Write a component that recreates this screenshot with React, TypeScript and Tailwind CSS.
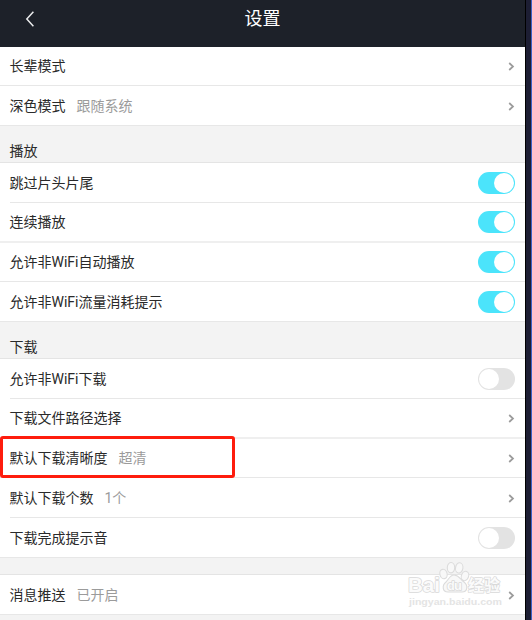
import type { ReactNode } from "react";
import clsx from "clsx";

interface RowProps {
  label: string;
  value?: string;
  height?: string;
  divider?: string;
  children?: ReactNode;
}

const Chevron = () => (
  <svg width="7" height="9" viewBox="0 0 7 9" fill="none" className="mt-px mr-2.5 shrink-0">
    <path d="M1.2 1 5 4.5 1.2 8" stroke="#9b9b9b" strokeWidth="1.7" />
  </svg>
);

const Toggle = ({ on = false }: { on?: boolean }) => (
  <span
    className={clsx(
      "mr-2.5 flex h-[22px] w-[37px] shrink-0 items-center rounded-full p-px",
      on ? "justify-end bg-[#4be4fb]" : "justify-start bg-[#e3e3e3]",
    )}
  >
    <span className="size-5 rounded-full bg-white" />
  </span>
);

const Row = ({ label, value, height = "h-[39px]", divider = "h-px", children }: RowProps) => (
  <div className="bg-white">
    <div className={clsx("flex items-center justify-between pl-[9.5px]", height)}>
      <div className="flex items-center text-[14px] leading-5 whitespace-nowrap">
        <span className="text-[#2a2a2a]">{label}</span>
        {value && <span className="ml-[11px] text-[#9b9b9b]">{value}</span>}
      </div>
      {children ?? <Chevron />}
    </div>
    <div className={clsx("bg-[#e7e7e7]", divider)} />
  </div>
);

const SectionTitle = ({ title }: { title: string }) => (
  <div className="flex h-[37px] items-end border-b border-[#e4e4e4] bg-[#f3f3f3] pb-px pl-[9.5px] text-[14px] leading-5 text-[#2a2a2a]">
    {title}
  </div>
);

const Watermark = () => (
  <svg width="100" height="48" viewBox="0 0 100 48" className="absolute top-[561px] left-[406px]">
    <g fill="#f8f8f8" stroke="#dcdcdc" strokeWidth="1.1">
      <ellipse cx="37.5" cy="13" rx="3.6" ry="4.8" transform="rotate(-14 37.5 13)" />
      <ellipse cx="45" cy="6.7" rx="3.7" ry="5.2" />
      <ellipse cx="53.2" cy="6.9" rx="3.7" ry="5.2" transform="rotate(8 53 7)" />
      <ellipse cx="59" cy="15" rx="3.6" ry="4.8" transform="rotate(20 59 15)" />
      <path d="M48 14c-4 0-5 4-8 7-4 3-4 10 2 10h14c6 0 6-7 2-10-4-3-5-7-10-7Z" />
    </g>
    <g
      fill="#fbfbfb"
      stroke="#d9d9d9"
      strokeWidth="1.6"
      strokeLinejoin="round"
      paintOrder="stroke"
      fontFamily="Liberation Sans, Noto Sans CJK SC, sans-serif"
      fontWeight="bold"
    >
      <text x="2" y="30.5" fontSize="21" textLength="32" lengthAdjust="spacingAndGlyphs">Bai</text>
      <text x="41" y="28.5" fontSize="13" textLength="15">du</text>
      <text x="62" y="29.5" fontSize="16" textLength="32" strokeWidth="1.4">经验</text>
    </g>
    <text
      x="3"
      y="44"
      fill="#e4e4e4"
      fontFamily="Liberation Sans, sans-serif"
      fontSize="9"
      fontWeight="bold"
      textLength="93"
      lengthAdjust="spacingAndGlyphs"
    >
      jingyan.baidu.com
    </text>
  </svg>
);

const App = () => (
  <div className="relative flex h-[620px] w-[532px] overflow-hidden bg-[#1d1e33] font-[Roboto,'Noto_Sans_CJK_SC',sans-serif]">
    <div className="flex w-[525px] flex-col bg-[#f3f3f3]">
      <header className="grid h-[47px] grid-cols-[60px_1fr_60px] items-center bg-[#1d2129] pb-2.5 text-white">
        <svg width="9" height="16" viewBox="0 0 9 16" fill="none" className="ml-[25px]">
          <path d="M8.4 .7 1.8 8l6.6 7.3" stroke="#e9eaeb" strokeWidth="1.5" />
        </svg>
        <h1 className="text-center text-[18px] leading-6">设置</h1>
      </header>

      <Row label="长辈模式" height="h-[38px]" />
      <Row label="深色模式" value="跟随系统" />

      <SectionTitle title="播放" />
      <Row label="跳过片头片尾" divider="ml-2.5 h-px">
        <Toggle on />
      </Row>
      <Row label="连续播放" height="h-[38px]" divider="h-0.5 bg-[#efefef]">
        <Toggle on />
      </Row>
      <Row label="允许非WiFi自动播放" height="h-[38px]">
        <Toggle on />
      </Row>
      <Row label="允许非WiFi流量消耗提示">
        <Toggle on />
      </Row>

      <SectionTitle title="下载" />
      <Row label="允许非WiFi下载" divider="ml-2.5 h-px">
        <Toggle />
      </Row>
      <Row label="下载文件路径选择" height="h-[38px]" divider="h-0.5 bg-[#efefef]" />
      <Row label="默认下载清晰度" value="超清" height="h-[38px]" />
      <Row label="默认下载个数" value="1个" divider="ml-2.5 h-px" />
      <Row label="下载完成提示音">
        <Toggle />
      </Row>

      <div className="h-[17px] shrink-0 border-b border-[#e4e4e4]" />
      <Row label="消息推送" value="已开启" />
    </div>
    <div className="w-px bg-black" />
    <div className="w-[5px] bg-[#1d1e33]" />
    <div className="w-px bg-[#3b62c4]" />

    {/* marks the download quality row */}
    <div className="absolute top-[436px] left-0 h-[42px] w-[235px] rounded-[3px] border-3 border-[#fe1c0d]" />
    <Watermark />
  </div>
);

export default App;
